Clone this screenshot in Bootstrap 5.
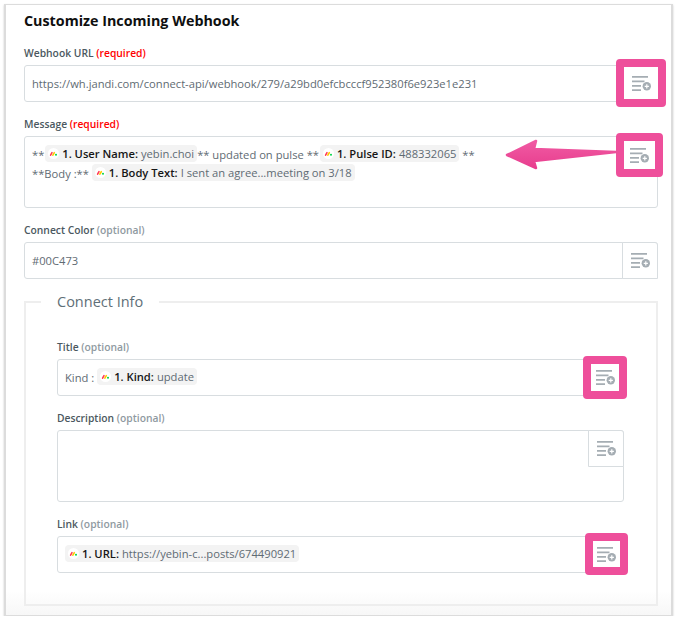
<!DOCTYPE html>
<html lang="en">
<head>
  <meta charset="UTF-8">
  <meta name="viewport" content="width=device-width, initial-scale=1">
  <title>Customize Incoming Webhook</title>
  <link href="https://cdn.jsdelivr.net/npm/bootstrap@5.3.0/dist/css/bootstrap.min.css" rel="stylesheet">
  <style>
    body { background: #fff; font-family: "Open Sans", "Noto Sans", sans-serif; color: #5f6b73; overflow: hidden; }
    .hook-panel {
      margin: 4px 5px 0 4px;
      height: 612px;
      padding: 6px 13px 0 18px;
      background: linear-gradient(to bottom, #fff 96%, #f7f7f7 100%);
      border: 1px solid #dcdcdc;
      border-left-width: 2px;
      border-right-width: 2px;
      box-shadow: 0 1px 2px rgba(0,0,0,.2);
    }
    .hook-title { font-size: 14.3px; font-weight: 700; color: #0f0f0f; line-height: 20px; margin: 0 0 15px; }
    .hook-label { display: block; font-size: 10.3px; font-weight: 600; color: #4b5860; line-height: 14px; margin: 0 0 5px; }
    .hook-label em { font-style: normal; color: #8f9aa1; }
    .hook-label b { font-weight: 600; color: #f00; }
    .hook-group { margin-bottom: 15px; position: relative; }
    .hook-field {
      position: relative;
      min-height: 37px;
      padding: 8px 7px;
      border: 1px solid #d8dde0;
      border-radius: 3px;
      font-size: 11.2px;
      line-height: 19px;
      background: #fff;
    }
    .hook-field.tall { height: 72px; }
    .field-chip { display: inline-flex; align-items: center; height: 17px; padding: 0 3px; background: #f3f3f3; border-radius: 4px; white-space: nowrap; }
    .field-chip strong { font-weight: 600; color: #161616; margin-right: 3px; }
    .chip-tight { margin-left: -2px; }
    .chip-logo { width: 11px; height: 11px; margin-right: 3px; flex: none; }
    .insert-btn {
      position: absolute; top: -1px; right: -1px;
      width: 36px; height: 37px;
      display: flex; align-items: center; justify-content: center;
      background: #fff;
      border: 1px solid #d8dde0;
      border-radius: 0 3px 0 0;
      padding: 0;
    }
    .insert-btn svg { width: 19px; height: 15px; }
    .btn-pink {
      border: 8px solid #ee4f9b;
      border-radius: 4px;
      background: #fff;
    }
    .pink-url { top: -7px; right: -9px; width: 50px; height: 48px; }
    .pink-msg { top: -4px; right: -6px; width: 47px; height: 44px; }
    .pink-title { top: -4px; right: -4px; width: 44px; height: 43px; }
    .pink-link { top: -4px; right: -5px; width: 43px; height: 42px; }
    .hook-set {
      border: 2px solid #eee;
      height: 305px;
      margin: 22px 0 0;
      padding: 37px 32px 0 31px;
      position: relative;
      min-width: 0;
    }
    .hook-set legend {
      float: none; width: auto;
      position: absolute; top: -11px; left: 15px;
      margin: 0;
      padding: 0 16px;
      font-size: 14.5px;
      line-height: 20px;
      background: #fff;
      color: #5f6f78;
    }
    .hook-arrow { position: absolute; left: 505px; top: 135px; width: 112px; height: 36px; z-index: 2; overflow: visible; }
  </style>
</head>
<body>
  <svg width="0" height="0" class="position-absolute">
    <defs>
      <symbol id="add-field" viewBox="0 0 19 15">
        <path d="M0 .9h16M0 5.3h12.5M0 9.8h9M0 14.1h9" stroke="#a5adb3" stroke-width="1.8" fill="none"/>
        <circle cx="14.8" cy="10.3" r="4.2" fill="#a5adb3"/>
        <path d="M12.7 10.3h4.2M14.8 8.2v4.2" stroke="#fff" stroke-width="1.2"/>
      </symbol>
      <symbol id="pulse-logo" viewBox="0 0 11 11">
        <circle cx="5.5" cy="5.5" r="5.5" fill="#fff"/>
        <path d="M2.6 7.2 4 4.6" stroke="#ff3d57" stroke-width="1.6" stroke-linecap="round"/>
        <path d="M4.9 7.2 6.3 4.6" stroke="#ffcb00" stroke-width="1.6" stroke-linecap="round"/>
        <circle cx="8" cy="6.8" r="1" fill="#00d647"/>
      </symbol>
      <linearGradient id="arrow-fill" x1="0" y1="0" x2="0" y2="1">
        <stop offset="0" stop-color="#f05aa3"/>
        <stop offset="1" stop-color="#e83e8e"/>
      </linearGradient>
    </defs>
  </svg>

  <div class="hook-panel">
    <form>
      <h5 class="hook-title">Customize Incoming Webhook</h5>

      <div class="hook-group">
        <label class="hook-label">Webhook URL <b>(required)</b></label>
        <div class="hook-field">
          https://wh.jandi.com/connect-api/webhook/279/a29bd0efcbcccf952380f6e923e1e231
          <button type="button" class="insert-btn btn-pink pink-url"><svg><use href="#add-field"/></svg></button>
        </div>
      </div>

      <div class="hook-group">
        <label class="hook-label">Message <b>(required)</b></label>
        <div class="hook-field tall">
          ** <span class="field-chip chip-tight"><svg class="chip-logo"><use href="#pulse-logo"/></svg><strong>1. User Name:</strong> yebin.choi</span>** updated on pulse ** <span class="field-chip chip-tight"><svg class="chip-logo"><use href="#pulse-logo"/></svg><strong>1. Pulse ID:</strong> 488332065</span> **<br>
          **Body :** <span class="field-chip"><svg class="chip-logo"><use href="#pulse-logo"/></svg><strong>1. Body Text:</strong> I sent an agree...meeting on 3/18</span>
          <button type="button" class="insert-btn btn-pink pink-msg"><svg><use href="#add-field"/></svg></button>
        </div>
      </div>

      <div class="hook-group">
        <label class="hook-label">Connect Color <em>(optional)</em></label>
        <div class="hook-field">
          #00C473
          <button type="button" class="insert-btn"><svg><use href="#add-field"/></svg></button>
        </div>
      </div>

      <fieldset class="hook-set">
        <legend>Connect Info</legend>

        <div class="hook-group">
          <label class="hook-label">Title <em>(optional)</em></label>
          <div class="hook-field">
            Kind : <span class="field-chip"><svg class="chip-logo"><use href="#pulse-logo"/></svg><strong>1. Kind:</strong> update</span>
            <button type="button" class="insert-btn btn-pink pink-title"><svg><use href="#add-field"/></svg></button>
          </div>
        </div>

        <div class="hook-group">
          <label class="hook-label">Description <em>(optional)</em></label>
          <div class="hook-field tall">
            <button type="button" class="insert-btn"><svg><use href="#add-field"/></svg></button>
          </div>
        </div>

        <div class="hook-group">
          <label class="hook-label">Link <em>(optional)</em></label>
          <div class="hook-field">
            <span class="field-chip"><svg class="chip-logo"><use href="#pulse-logo"/></svg><strong>1. URL:</strong> https://yebin-c...posts/674490921</span>
            <button type="button" class="insert-btn btn-pink pink-link"><svg><use href="#add-field"/></svg></button>
          </div>
        </div>
      </fieldset>
    </form>
  </div>

  <svg class="hook-arrow" viewBox="505 135 112 36">
    <path d="M616 152 L534 149 L536 141 L507 155 L536 168 L534 161 Z" fill="url(#arrow-fill)" stroke="url(#arrow-fill)" stroke-width="2.5" stroke-linejoin="round"/>
  </svg>
</body>
</html>
